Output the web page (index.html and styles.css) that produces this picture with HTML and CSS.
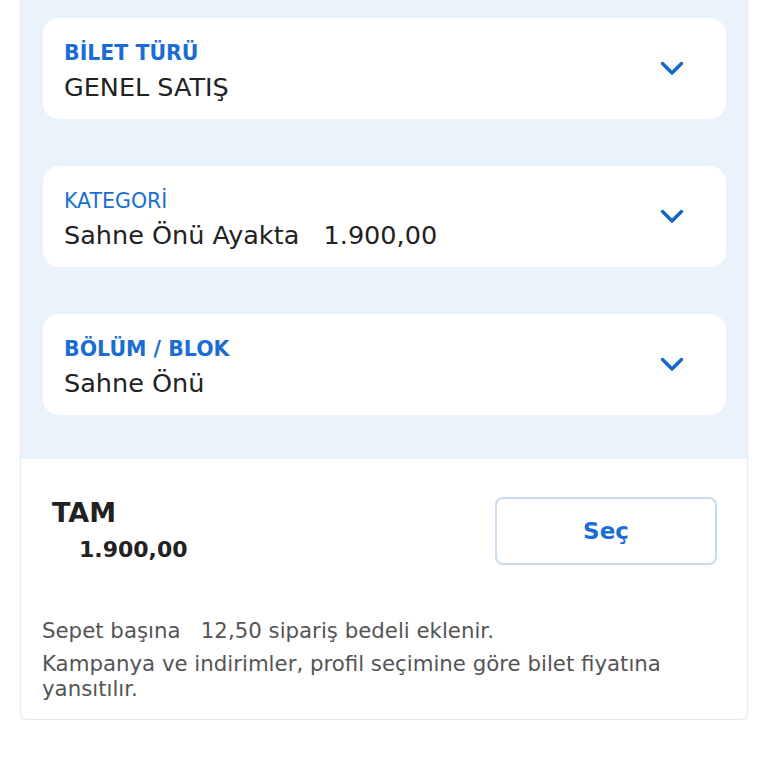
FILE: index.html
```html
<!DOCTYPE html>
<html lang="tr">
<head>
    <meta charset="UTF-8">
    <meta name="viewport" content="width=device-width, initial-scale=1.0">
    <title>Bilet Seçimi</title>
    <link rel="stylesheet" href="styles.css">
</head>
<body>
    <section class="panel">
        <div class="selects">
            <div class="field">
                <div class="field-text">
                    <span class="field-label">BİLET TÜRÜ</span>
                    <span class="field-value">GENEL SATIŞ</span>
                </div>
                <svg class="chevron" viewBox="0 0 24 16" width="24" height="16"><path d="M2.5 2.5 L12 12 L21.5 2.5" /></svg>
            </div>
            <div class="field">
                <div class="field-text">
                    <span class="field-label light">KATEGORİ</span>
                    <span class="field-value">Sahne Önü Ayakta&nbsp;&nbsp;&nbsp;1.900,00</span>
                </div>
                <svg class="chevron" viewBox="0 0 24 16" width="24" height="16"><path d="M2.5 2.5 L12 12 L21.5 2.5" /></svg>
            </div>
            <div class="field">
                <div class="field-text">
                    <span class="field-label">BÖLÜM / BLOK</span>
                    <span class="field-value">Sahne Önü</span>
                </div>
                <svg class="chevron" viewBox="0 0 24 16" width="24" height="16"><path d="M2.5 2.5 L12 12 L21.5 2.5" /></svg>
            </div>
        </div>

        <div class="ticket">
            <div class="ticket-info">
                <span class="ticket-name">TAM</span>
                <span class="ticket-price">1.900,00</span>
            </div>
            <button class="select-btn">Seç</button>
        </div>

        <div class="notes">
            <p>Sepet başına&nbsp;&nbsp;&nbsp;12,50 sipariş bedeli eklenir.</p>
            <p>Kampanya ve indirimler, profil seçimine göre bilet fiyatına yansıtılır.</p>
        </div>
    </section>
</body>
</html>
```
FILE: styles.css
```css
* {
    box-sizing: border-box;
}
body {
    margin: 0;
    font-family: "DejaVu Sans", sans-serif;
    background-color: #fff;
    color: #222;
}
.panel {
    width: 728px;
    margin-left: 20px;
    border: 1px solid #e6e8eb;
    border-top: none;
    border-radius: 0 0 8px 8px;
    box-shadow: 0 1px 2px rgba(0, 0, 0, 0.05);
    overflow: hidden;
}
.selects {
    background-color: #eaf2fb;
    padding: 18px 21px 44px 22px;
    display: flex;
    flex-direction: column;
    gap: 47px;
}
.field {
    height: 101px;
    background-color: #fff;
    border-radius: 16px;
    padding: 0 42px 0 21px;
    display: flex;
    align-items: center;
    justify-content: space-between;
}
.field-text {
    display: flex;
    flex-direction: column;
    line-height: 34px;
    margin-top: 3px;
}
.field-label {
    font-size: 20.5px;
    font-weight: 700;
    color: #1a6ed3;
}
.field-label.light {
    font-weight: 400;
}
.field-value {
    font-size: 25.5px;
    color: #222;
}
.chevron {
    fill: none;
    stroke: #1467c8;
    stroke-width: 3.4;
    stroke-linecap: round;
    stroke-linejoin: round;
}
.ticket {
    display: flex;
    align-items: center;
    justify-content: space-between;
    padding: 35px 30px 0 31px;
}
.ticket-info {
    display: flex;
    flex-direction: column;
    line-height: 37px;
}
.ticket-name {
    font-size: 27px;
    font-weight: 700;
    color: #222;
}
.ticket-price {
    font-size: 22px;
    font-weight: 700;
    color: #222;
    padding-left: 27px;
}
.select-btn {
    width: 222px;
    height: 68px;
    background-color: #fff;
    border: 2px solid #c6dcf3;
    border-radius: 8px;
    color: #1a6ed3;
    font-family: inherit;
    font-size: 23px;
    font-weight: 700;
    cursor: pointer;
}
.notes {
    padding: 50px 50px 18px 21px;
    color: #555;
    font-size: 21.3px;
    line-height: 25px;
}
.notes p {
    margin: 0 0 8px;
}
.notes p:last-child {
    margin-bottom: 0;
}
```
